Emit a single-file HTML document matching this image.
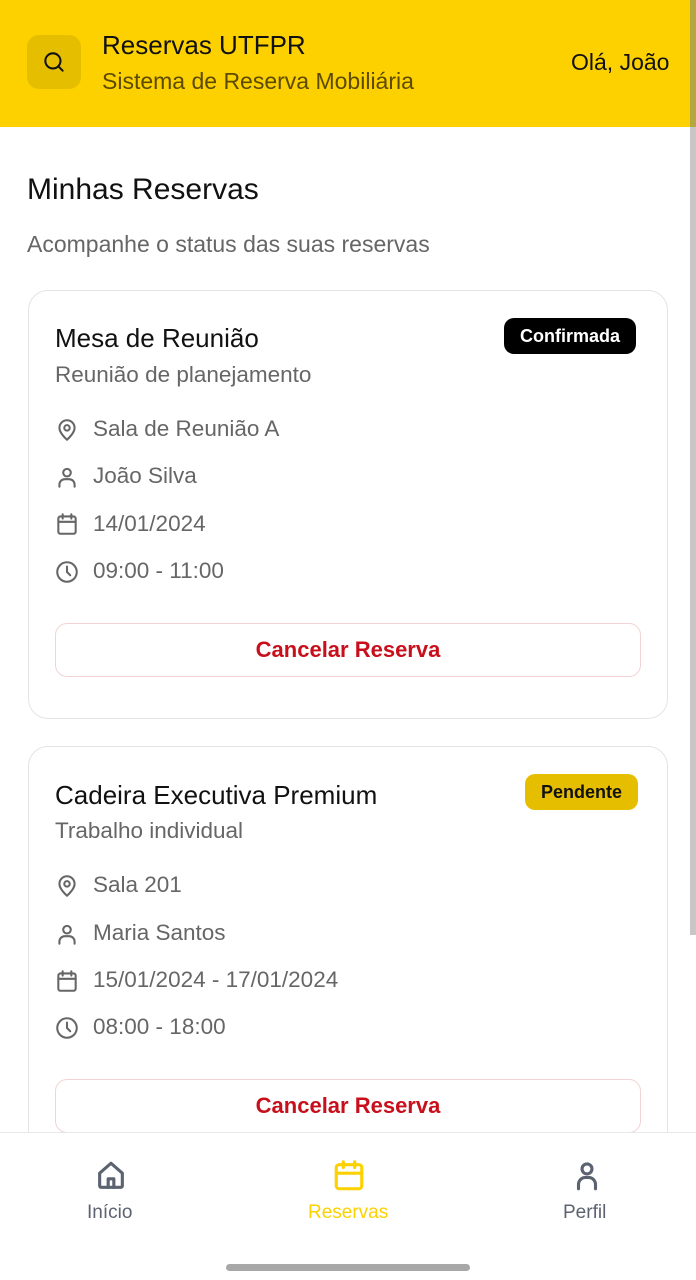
<!DOCTYPE html>
<html><head><meta charset="utf-8"><style>
*{margin:0;padding:0;box-sizing:border-box}
body{width:696px;height:1280px;overflow:hidden;background:#fff;font-family:"Liberation Sans",Roboto,sans-serif;position:relative;color:#111}
.a{position:absolute}
.hdr{left:0;top:0;width:696px;height:127px;background:#FDD100}
.card{left:28px;width:640px;border:1px solid #e4e4e7;border-radius:20px;background:#fff}
.t{font-size:26px;color:#111}
.s{font-size:22.5px;color:#666}
.row{font-size:22.5px;color:#666}
.ic{position:absolute;left:54px;width:26px;height:26px}
.btn{left:55px;width:586px;height:54px;border:1.5px solid #f3d3d3;border-radius:12px;color:#c8101c;font-size:22px;font-weight:bold;text-align:center;line-height:52px;background:#fff}
.badge{border-radius:10px;font-size:18px;font-weight:bold;padding:0 16px;height:36px;line-height:36px}
svg{fill:none;stroke:#666;stroke-width:1.9;stroke-linecap:round;stroke-linejoin:round}
</style></head><body>
<div class="a hdr"></div>
<div class="a" style="left:27px;top:35px;width:54px;height:54px;border-radius:12px;background:#E6BE00"></div>
<svg class="a" style="left:41px;top:49px;width:26px;height:26px;stroke:#111" viewBox="0 0 24 24"><circle cx="11" cy="11" r="7"/><path d="M16 16l4 4"/></svg>
<div class="a" style="left:102px;top:30px;font-size:26px;color:#111">Reservas UTFPR</div>
<div class="a" style="left:102px;top:68px;font-size:23px;color:#5c4a00">Sistema de Reserva Mobiliária</div>
<div class="a" style="left:571px;top:49px;font-size:23px;color:#111">Olá, João</div>
<div class="a" style="left:690px;top:0;width:6px;height:935px;background:#c7c7c7"></div>
<div class="a" style="left:690px;top:0;width:6px;height:127px;background:#b5a640"></div>

<div class="a" style="left:27px;top:173px;font-size:30px;color:#111">Minhas Reservas</div>
<div class="a" style="left:27px;top:231px;font-size:23px;color:#666">Acompanhe o status das suas reservas</div>

<div class="a card" style="top:290px;height:429px"></div>
<div class="a t" style="left:55px;top:323px">Mesa de Reunião</div>
<div class="a badge" style="left:504px;top:318px;background:#000;color:#fff">Confirmada</div>
<div class="a s" style="left:55px;top:362px">Reunião de planejamento</div>
<svg class="ic" style="top:417px" viewBox="0 0 24 24"><path d="M12 21s-7-6-7-11a7 7 0 0 1 14 0c0 5-7 11-7 11z"/><circle cx="12" cy="10" r="2.5"/></svg>
<div class="a row" style="left:93px;top:416px">Sala de Reunião A</div>
<svg class="ic" style="top:464px" viewBox="0 0 24 24"><circle cx="12" cy="8" r="3.5"/><path d="M5 21v-2a5 5 0 0 1 5-5h4a5 5 0 0 1 5 5v2"/></svg>
<div class="a row" style="left:93px;top:463px">João Silva</div>
<svg class="ic" style="top:511px" viewBox="0 0 24 24"><rect x="4" y="5" width="16" height="16" rx="2"/><path d="M4 10h16M8 3v4M16 3v4"/></svg>
<div class="a row" style="left:93px;top:511px">14/01/2024</div>
<svg class="ic" style="top:559px" viewBox="0 0 24 24"><circle cx="12" cy="12" r="9"/><path d="M12 7v5l3 3"/></svg>
<div class="a row" style="left:93px;top:558px">09:00 - 11:00</div>
<div class="a btn" style="top:623px">Cancelar Reserva</div>

<div class="a card" style="top:746px;height:420px"></div>
<div class="a t" style="left:55px;top:780px">Cadeira Executiva Premium</div>
<div class="a badge" style="left:525px;top:774px;background:#E6BE00;color:#111">Pendente</div>
<div class="a s" style="left:55px;top:818px">Trabalho individual</div>
<svg class="ic" style="top:873px" viewBox="0 0 24 24"><path d="M12 21s-7-6-7-11a7 7 0 0 1 14 0c0 5-7 11-7 11z"/><circle cx="12" cy="10" r="2.5"/></svg>
<div class="a row" style="left:93px;top:872px">Sala 201</div>
<svg class="ic" style="top:921px" viewBox="0 0 24 24"><circle cx="12" cy="8" r="3.5"/><path d="M5 21v-2a5 5 0 0 1 5-5h4a5 5 0 0 1 5 5v2"/></svg>
<div class="a row" style="left:93px;top:920px">Maria Santos</div>
<svg class="ic" style="top:968px" viewBox="0 0 24 24"><rect x="4" y="5" width="16" height="16" rx="2"/><path d="M4 10h16M8 3v4M16 3v4"/></svg>
<div class="a row" style="left:93px;top:967px">15/01/2024 - 17/01/2024</div>
<svg class="ic" style="top:1015px" viewBox="0 0 24 24"><circle cx="12" cy="12" r="9"/><path d="M12 7v5l3 3"/></svg>
<div class="a row" style="left:93px;top:1014px">08:00 - 18:00</div>
<div class="a btn" style="top:1079px">Cancelar Reserva</div>

<div class="a" style="left:0;top:1132px;width:696px;height:148px;background:#fff;border-top:1px solid #e8e8e8"></div>
<svg class="a" style="left:94px;top:1159px;width:34px;height:34px;stroke:#5b6270;stroke-width:2.2" viewBox="0 0 24 24"><path d="M4 19V10l8-7 8 7v9a1 1 0 0 1-1 1H5a1 1 0 0 1-1-1z"/><path d="M10 20v-6h4v6"/></svg>
<div class="a" style="left:87px;top:1202px;font-size:19px;color:#5b6270">Início</div>
<svg class="a" style="left:332px;top:1159px;width:34px;height:34px;stroke:#FDD100;stroke-width:2.2" viewBox="0 0 24 24"><rect x="3" y="4" width="18" height="17" rx="2"/><path d="M3 10h18M8 2v4M16 2v4"/></svg>
<div class="a" style="left:308px;top:1202px;font-size:19px;color:#FDD100">Reservas</div>
<svg class="a" style="left:570px;top:1159px;width:34px;height:34px;stroke:#5b6270;stroke-width:2.2" viewBox="0 0 24 24"><circle cx="12" cy="7" r="3.5"/><path d="M6 21v-3a5 5 0 0 1 5-5h2a5 5 0 0 1 5 5v3"/></svg>
<div class="a" style="left:563px;top:1202px;font-size:19px;color:#5b6270">Perfil</div>
<div class="a" style="left:226px;top:1264px;width:244px;height:7px;border-radius:4px;background:#a8a8a8"></div>
</body></html>
